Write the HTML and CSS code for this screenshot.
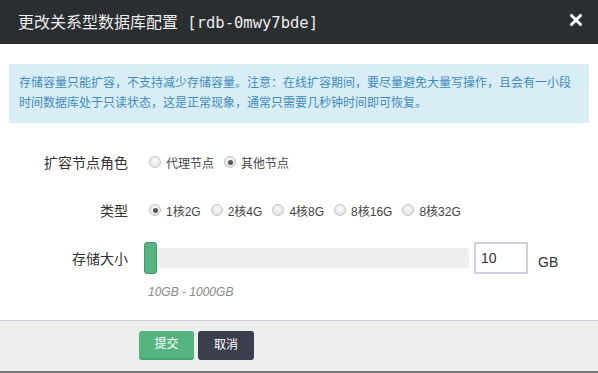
FILE: index.html
```html
<!DOCTYPE html>
<html lang="zh">
<head>
<meta charset="utf-8">
<link rel="stylesheet" href="styles.css">
</head>
<body>
<div class="dialog">
  <div class="header">
    <div class="title">更改关系型数据库配置<span class="mono"> [rdb-0mwy7bde]</span></div>
    <svg class="close" width="12" height="12" viewBox="0 0 12 12"><path d="M1.5 1.5 L10.5 10.5 M10.5 1.5 L1.5 10.5" stroke="#fff" stroke-width="3" stroke-linecap="square"/></svg>
  </div>
  <div class="info">存储容量只能扩容，不支持减少存储容量。注意：在线扩容期间，要尽量避免大量写操作，且会有一小段时间数据库处于只读状态，这是正常现象，通常只需要几秒钟时间即可恢复。</div>
  <div class="form">
    <div class="row r1">
      <div class="label">扩容节点角色</div>
      <div class="control">
        <label class="opt"><span class="radio"></span>代理节点</label>
        <label class="opt"><span class="radio on"></span>其他节点</label>
      </div>
    </div>
    <div class="row r2">
      <div class="label">类型</div>
      <div class="control">
        <label class="opt"><span class="radio on"></span>1核2G</label>
        <label class="opt"><span class="radio"></span>2核4G</label>
        <label class="opt"><span class="radio"></span>4核8G</label>
        <label class="opt"><span class="radio"></span>8核16G</label>
        <label class="opt"><span class="radio"></span>8核32G</label>
      </div>
    </div>
    <div class="row r3">
      <div class="label">存储大小</div>
      <div class="control slider-ctl">
        <div class="slider"><span class="handle"></span><span class="track"></span></div>
        <div class="num">10</div>
        <div class="unit">GB</div>
      </div>
    </div>
    <div class="row r4">
      <div class="label"></div>
      <div class="control hint">10GB - 1000GB</div>
    </div>
  </div>
  <div class="footer">
    <div class="btn submit">提交</div>
    <div class="btn cancel">取消</div>
  </div>
</div>
</body>
</html>
```
FILE: styles.css
```css
html, body {
  margin: 0;
  padding: 0;
  background: #fff;
}
body {
  font-family: "Liberation Sans", "Noto Sans CJK SC", sans-serif;
  color: #333;
  width: 598px;
  height: 373px;
  overflow: hidden;
}
.dialog {
  display: flex;
  flex-direction: column;
  height: 373px;
}
.header {
  height: 44px;
  flex: none;
  background: #2b2e31;
  display: flex;
  align-items: center;
  justify-content: space-between;
  padding: 0 16px 0 18px;
}
.title {
  font-family: "DejaVu Sans Mono", "Noto Sans CJK SC", monospace;
  font-size: 16px;
  color: #ececec;
  margin-top: -2px;
}
.mono {
  font-size: 15.5px;
}
.close {
  display: block;
  margin-top: -5px;
}
.info {
  margin: 20px 9px 0;
  background: #d9edf7;
  color: #3f8cbc;
  font-size: 12px;
  line-height: 20px;
  padding: 9px 10px 10px;
}
.form {
  flex: 1;
  padding-top: 27px;
}
.row {
  display: grid;
  grid-template-columns: 128px 1fr;
  column-gap: 20px;
  align-items: center;
}
.r1, .r2 { height: 24px; margin-bottom: 24px; }
.r2 { margin-bottom: 20px; }
.r3 { height: 32px; margin-bottom: 10px; }
.r4 { height: 16px; }
.label {
  text-align: right;
  font-size: 14px;
  color: #333;
}
.control {
  display: flex;
  align-items: center;
  font-size: 12px;
  color: #444;
}
.opt {
  display: flex;
  align-items: center;
  margin-right: 9px;
}
.radio {
  width: 10px;
  height: 10px;
  border-radius: 50%;
  border: 1px solid #c4c4c4;
  background: radial-gradient(circle at 50% 40%, #fafafa 0%, #dcdcdc 100%);
  margin: 0 5px 0 1px;
  position: relative;
  box-sizing: content-box;
}
.radio.on::after {
  content: "";
  position: absolute;
  left: 2.5px;
  top: 2.5px;
  width: 5px;
  height: 5px;
  border-radius: 50%;
  background: #555;
}
.slider-ctl {
  margin-left: -4px;
}
.slider {
  display: flex;
  align-items: center;
  width: 325px;
}
.handle {
  width: 11px;
  height: 30px;
  background: #55b480;
  border: 1px solid #3e9a66;
  border-radius: 3px;
  flex: none;
}
.track {
  flex: 1;
  height: 20px;
  background: #eeeeee;
  border-radius: 0 3px 3px 0;
}
.num {
  margin-left: 5px;
  width: 45px;
  height: 28px;
  border: 2px solid #cfcfe0;
  font-size: 14px;
  line-height: 28px;
  padding-left: 5px;
  color: #333;
}
.unit {
  margin-left: 10px;
  font-size: 14px;
  color: #333;
  padding-top: 8px;
}
.hint {
  font-style: italic;
  color: #888;
  font-size: 12px;
}
.footer {
  flex: none;
  border-top: 1px solid #cfcfd8;
  border-bottom: 2px solid #7a7a7a;
  background: #eeeeee;
  display: flex;
  align-items: flex-start;
  padding: 10px 0 0 139px;
  gap: 4px;
  box-sizing: border-box;
  height: 53px;
}
.btn {
  height: 29px;
  line-height: 29px;
  font-size: 12px;
  color: #fff;
  text-align: center;
  border-radius: 3px;
  box-sizing: border-box;
}
.submit {
  width: 55px;
  background: #55b580;
  border-bottom: 2px solid #48a572;
  line-height: 27px;
}
.cancel {
  width: 56px;
  background: #3b3e4c;
}
```
